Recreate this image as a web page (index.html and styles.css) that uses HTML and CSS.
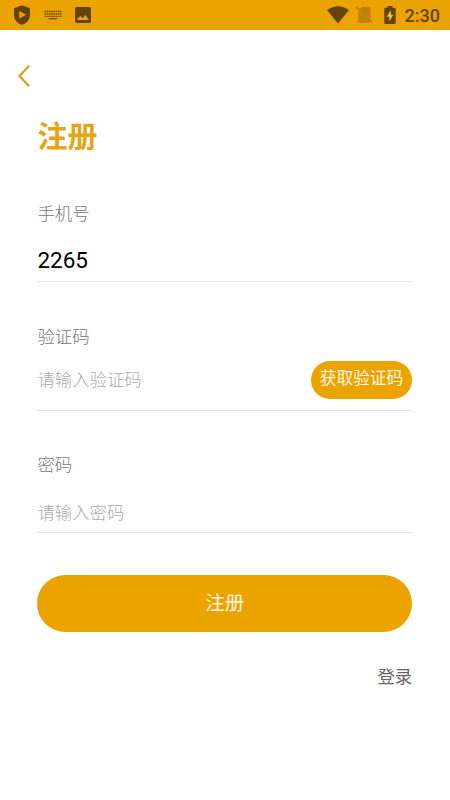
FILE: index.html
```
<!DOCTYPE html>
<html lang="zh-CN">
<head>
<meta charset="utf-8">
<title>注册</title>
<link rel="stylesheet" href="styles.css">
</head>
<body>
<header class="status">
  <div class="status-left">
    <svg width="18" height="20" viewBox="0 0 18 20"><path fill="#644307" d="M9 0.2L17 3.2V10C17 15 13.5 18.4 9 19.8C4.500 18.400 1 15 1 10V3.200Z"/><path fill="#eba300" d="M6.200 6L13.200 9.800L6.200 13.600Z"/></svg>
    <svg width="18" height="10" viewBox="0 0 18 10"><g fill="none" stroke="#76500a"><path stroke-width="1.500" stroke-dasharray="1.700 .5" d="M.5 1.500H17.500M.5 4H17.500"/><path stroke-width="1.300" stroke-dasharray="1.700 .5" d="M.5 6.300H17.500"/><path stroke-width="1.300" d="M4.500 8.700H13.500"/></g></svg>
    <svg width="16" height="16" viewBox="0 0 16 16"><rect width="16" height="16" rx="1.800" fill="#644307"/><path fill="#eba300" d="M2 13L5.300 8.800L7.500 11.500L10.300 8L14 13Z"/></svg>
  </div>
  <div class="status-right">
    <svg width="22" height="18" viewBox="0 0 22 18"><path fill="#644307" d="M0 4Q11-3.600 22 4L11 17.500Z"/></svg>
    <svg class="sim" width="17" height="18" viewBox="0 0 17 18"><path fill="#bd8205" d="M5.800 1H13.200Q14.500 1 14.500 2.300V12.900L3.900 2.900ZM2.300 4.500L14 15.600Q13.700 17 12.700 17H3.600Q2.300 17 2.300 15.700Z"/><path stroke="#ad7605" stroke-width="1.300" d="M.8 1.200L16 16.200"/></svg>
    <svg class="battery" width="12" height="18" viewBox="0 0 12 18"><path fill="#644307" d="M3.500 0H8.500V1.800H10.500Q11.700 1.800 11.700 3V16.800Q11.700 18 10.500 18H1.500Q.3 18 .3 16.800V3Q.3 1.800 1.500 1.800H3.500Z"/><path fill="#eec14a" d="M7 4L2.700 10.700H5.300V15.500L9.300 8.800H7Z"/></svg>
    <span class="clock">2:30</span>
  </div>
</header>
<nav class="nav">
  <svg width="14" height="24" viewBox="0 0 14 24"><path fill="none" stroke="#dba21b" stroke-width="2.400" stroke-linecap="round" stroke-linejoin="round" d="M11.500 2.500L2.500 12L11.500 21.500"/></svg>
</nav>
<main class="page">
  <h1 class="title">注册</h1>
  <section class="field phone">
    <div class="label">手机号</div>
    <div class="row value">2265</div>
  </section>
  <section class="field code">
    <div class="label">验证码</div>
    <div class="row hint"><span class="placeholder">请输入验证码</span><button class="get-code">获取验证码</button></div>
  </section>
  <section class="field password">
    <div class="label">密码</div>
    <div class="row hint">请输入密码</div>
  </section>
  <button class="submit">注册</button>
  <a class="login">登录</a>
</main>
</body>
</html>
```
FILE: styles.css
```
* { box-sizing: border-box; }
body {
  margin: 0;
  height: 800px;
  overflow: hidden;
  background: #fff;
  font-family: Roboto, "Noto Sans CJK SC", sans-serif;
}
svg { display: block; flex: none; }
button { border: 0; padding: 0; background: #eba300; color: #fff8e0; font-family: inherit; }
.status {
  height: 30px;
  background: #eba300;
  display: flex;
  justify-content: space-between;
  align-items: center;
  padding: 0 10px 0 13px;
}
.status-left, .status-right { display: flex; align-items: center; }
.status-left { gap: 13px; }
.sim { margin-left: 7px; }
.battery { margin-left: 11px; }
.clock { margin-left: 9px; font-size: 18px; font-weight: 500; line-height: 30px; color: #644307; padding-top: 2px; }
.nav { height: 86px; padding: 34px 0 0 17px; }
.page { padding: 0 37.8px 0 37.4px; display: flex; flex-direction: column; }
.title { margin: 0; height: 42px; line-height: 42px; font-size: 30px; font-weight: 700; color: #e6a519; }
.field { border-bottom: 1px solid #e6e6e6; }
.label { height: 24px; line-height: 24px; font-size: 17.400px; font-weight: 300; color: #777; }
.row { display: flex; align-items: center; justify-content: space-between; }
.phone { margin-top: 44px; height: 80px; }
.phone .row { height: 44px; margin-top: 12px; }
.value { font-size: 22.500px; font-weight: 400; color: #000; }
.hint { font-size: 17.400px; font-weight: 300; color: #aaa; }
.placeholder { padding-bottom: 4px; }
.code { margin-top: 43px; height: 86px; }
.code .row { height: 38px; margin-top: 12px; }
.get-code { width: 101.500px; height: 38px; border-radius: 19px; font-size: 16.700px; line-height: 24px; padding-bottom: 3px; }
.password { margin-top: 42px; height: 80px; }
.password .row { height: 36px; margin-top: 16px; }
.submit { margin-top: 42px; height: 57px; border-radius: 29px; font-size: 19.500px; padding-bottom: 4px; }
.login { align-self: flex-end; margin-top: 33px; line-height: 24px; font-size: 17.400px; color: #666; }
```
